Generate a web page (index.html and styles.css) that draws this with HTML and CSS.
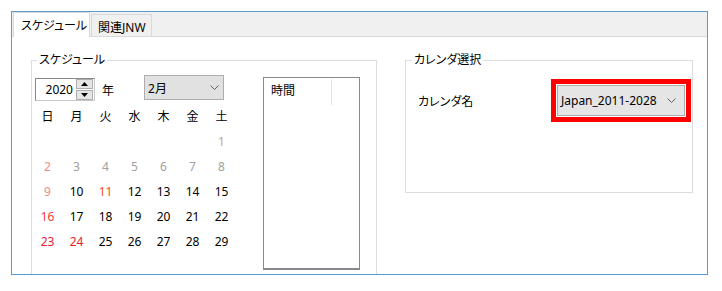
FILE: index.html
```html
<!DOCTYPE html>
<html lang="ja">
<head>
    <meta charset="UTF-8">
    <meta name="viewport" content="width=device-width, initial-scale=1.0">
    <title>スケジュール</title>
    <link rel="stylesheet" href="styles.css">
</head>
<body>
    <div class="window">
        <div class="tabs">
            <div class="tab active">スケジュール</div>
            <div class="tab">関連JNW</div>
        </div>

        <div class="panel">
            <!-- schedule group -->
            <div class="group group-schedule">
                <div class="group-title">スケジュール</div>
                <div class="sched-body">
                    <div class="calendar">
                        <div class="cal-controls">
                            <div class="spin">
                                <span class="spin-value">2020</span>
                                <span class="spin-buttons">
                                    <span class="spin-btn"><svg width="7" height="4" viewBox="0 0 7 4"><path d="M0 4 L3.5 0 L7 4 Z" fill="#000"/></svg></span>
                                    <span class="spin-btn"><svg width="7" height="4" viewBox="0 0 7 4"><path d="M0 0 L3.5 4 L7 0 Z" fill="#000"/></svg></span>
                                </span>
                            </div>
                            <span class="year-label">年</span>
                            <div class="combo combo-month">
                                <span>2月</span>
                                <svg class="chevron" width="9" height="5" viewBox="0 0 9 5"><path d="M0.5 0.5 L4.5 4.5 L8.5 0.5" fill="none" stroke="#606060" stroke-width="1"/></svg>
                            </div>
                        </div>
                        <div class="cal-grid">
                            <span>日</span><span>月</span><span>火</span><span>水</span><span>木</span><span>金</span><span>土</span>
                            <span></span><span></span><span></span><span></span><span></span><span></span><span class="d-tan">1</span>
                            <span class="d-pink">2</span><span class="d-gray">3</span><span class="d-gray">4</span><span class="d-gray">5</span><span class="d-gray">6</span><span class="d-gray">7</span><span class="d-gray">8</span>
                            <span class="d-pink">9</span><span>10</span><span class="d-holiday">11</span><span>12</span><span>13</span><span>14</span><span>15</span>
                            <span class="d-sun">16</span><span>17</span><span>18</span><span>19</span><span>20</span><span>21</span><span>22</span>
                            <span class="d-red">23</span><span class="d-red">24</span><span>25</span><span>26</span><span>27</span><span>28</span><span>29</span>
                        </div>
                    </div>
                    <div class="timelist">
                        <div class="timelist-header">
                            <span class="timelist-col">時間</span>
                        </div>
                    </div>
                </div>
            </div>

            <!-- calendar select group -->
            <div class="group group-calendar">
                <div class="group-title">カレンダ選択</div>
                <div class="cal-row">
                    <span class="cal-label">カレンダ名</span>
                    <div class="highlight">
                        <div class="combo combo-calendar">
                            <span>Japan_2011-2028</span>
                            <svg class="chevron" width="9" height="5" viewBox="0 0 9 5"><path d="M0.5 0.5 L4.5 4.5 L8.5 0.5" fill="none" stroke="#606060" stroke-width="1"/></svg>
                        </div>
                    </div>
                </div>
            </div>
        </div>
    </div>
</body>
</html>
```

FILE: styles.css
```css
body {
    margin: 0;
    background: #ffffff;
    font-family: "Noto Sans", "Noto Sans CJK JP", sans-serif;
    font-size: 12px;
    font-feature-settings: "palt";
    color: #000000;
}

.window {
    margin: 11px 0 0 11px;
    width: 697px;
    height: 264px;
    box-sizing: border-box;
    border: 1px solid #5a9bd5;
    background: #f0f0f0;
    overflow: hidden;
    display: flex;
    flex-direction: column;
}

/* Tabs */
.tabs {
    display: flex;
    align-items: flex-end;
    height: 27px;
    box-sizing: border-box;
    padding-left: 1px;
    border-bottom: 1px solid #d9d9d9;
}

.tab {
    box-sizing: border-box;
    height: 22px;
    padding: 0 5px 0 6px;
    line-height: 25px;
    white-space: nowrap;
    border: 1px solid #d9d9d9;
    border-bottom: none;
    background: #f0f0f0;
}

.tab.active {
    height: 25px;
    width: 77px;
    margin-bottom: -1px;
    margin-right: 1px;
    padding: 0 6px 0 7px;
    line-height: 25px;
    background: #ffffff;
}

/* Panel */
.panel {
    flex: 1;
    background: #ffffff;
    display: flex;
    align-items: flex-start;
    padding-left: 19px;
}

.group {
    box-sizing: border-box;
    margin-top: 23px;
    border: 1px solid #dcdcdc;
}

.group-title {
    width: fit-content;
    margin: -9px 0 0 5px;
    padding: 0 2px;
    background: #ffffff;
    line-height: 16px;
}

.group-schedule {
    width: 346px;
    height: 240px;
}

.group-calendar {
    width: 288px;
    height: 133px;
    margin-left: 28px;
}

.group-calendar .group-title {
    margin-left: 6px;
}

/* Schedule body */
.sched-body {
    display: flex;
    align-items: flex-start;
    margin-top: 7px;
    padding-left: 1px;
}

.calendar {
    width: 203px;
}

.cal-controls {
    display: flex;
    align-items: flex-start;
    height: 25px;
}

.spin {
    display: flex;
    box-sizing: border-box;
    width: 60px;
    height: 23px;
    margin: 3px 0 0 2px;
    border: 1px solid #c8c8c8;
    border-top-color: #8a8a8a;
    border-left-color: #8a8a8a;
}

.spin-value {
    flex: 1;
    text-align: right;
    padding-right: 3px;
    line-height: 21px;
}

.spin-buttons {
    display: flex;
    flex-direction: column;
    justify-content: space-between;
    width: 17px;
    padding: 0 1px 0 0;
}

.spin-btn {
    box-sizing: border-box;
    height: 10px;
    background: #e6e6e6;
    border: 1px solid #adadad;
    display: flex;
    align-items: center;
    justify-content: center;
}

.year-label {
    margin: 5px 0 0 7px;
    line-height: 21px;
}

.combo {
    box-sizing: border-box;
    display: flex;
    align-items: center;
    justify-content: space-between;
    background: #e1e1e1;
    border: 1px solid #adadad;
}

.combo-month {
    width: 80px;
    height: 25px;
    margin-left: 30px;
    padding: 0 4px 0 3px;
}

.cal-grid {
    display: grid;
    grid-template-columns: repeat(7, 29px);
    grid-auto-rows: 25px;
    margin-top: 4px;
    text-align: center;
    line-height: 25px;
}

.d-tan { color: #c9a584; }
.d-pink { color: #f08a8a; }
.d-gray { color: #a0a0a0; }
.d-holiday { color: #f04e23; }
.d-sun { color: #f03c3c; }
.d-red { color: #ee1c2e; }

/* Time list */
.timelist {
    box-sizing: border-box;
    width: 97px;
    height: 193px;
    margin: 2px 0 0 27px;
    border: 1px solid #868a90;
    border-bottom-width: 2px;
}

.timelist-header {
    display: flex;
    padding-top: 1px;
}

.timelist-col {
    box-sizing: border-box;
    width: 68px;
    height: 26px;
    padding-left: 7px;
    line-height: 24px;
    border-right: 1px solid #e5e5e5;
}

/* Calendar select */
.cal-row {
    display: flex;
    align-items: center;
    justify-content: space-between;
    margin-top: 11px;
    padding: 0 1px 0 12px;
}

.highlight {
    border: 5px solid #ff0000;
    padding: 1px;
    background: #ffffff;
}

.combo-calendar {
    width: 128px;
    height: 31px;
    background: #e5e5e5;
    padding: 0 8px 0 3px;
}
```
